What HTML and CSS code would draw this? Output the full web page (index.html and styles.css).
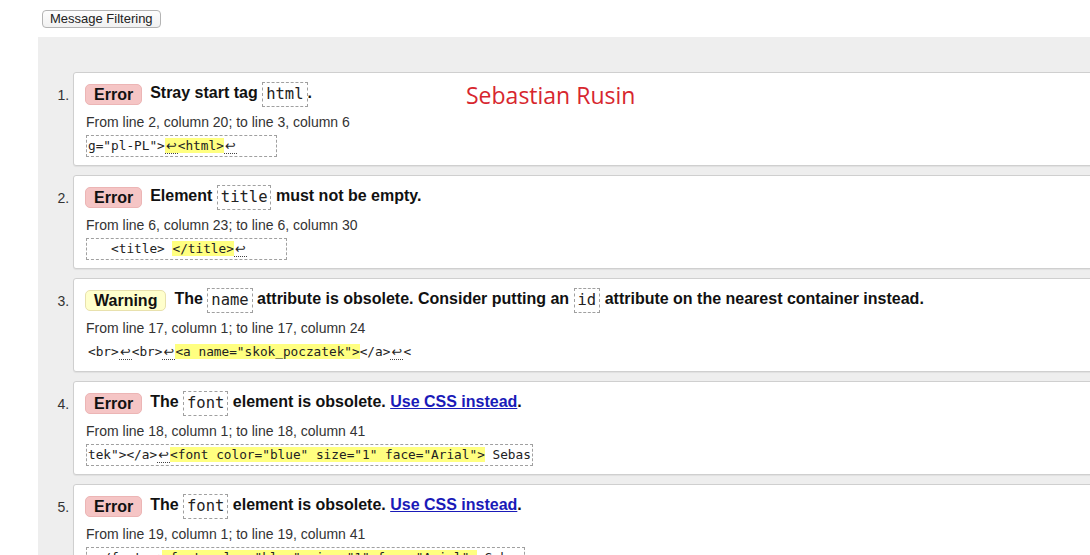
FILE: index.html
```html
<!DOCTYPE html>
<html lang="en">
<head>
<meta charset="utf-8">
<title>Validator results</title>
<link rel="stylesheet" href="styles.css">
</head>
<body>
<div class="page">
  <div class="toolbar">
    <button class="filter-btn" type="button">Message Filtering</button>
  </div>
  <div class="results">
    <ol class="messages">
      <li class="card">
        <p class="msg"><span class="badge badge-error">Error</span><strong class="text">Stray start tag <code>html</code>.</strong></p>
        <p class="loc">From line 2, column 20; to line 3, column 6</p>
        <p class="extract"><code>g="pl-PL"&gt;<mark class="hl"><span class="lf">↩</span>&lt;html&gt;</mark><span class="lf">↩</span>     </code></p>
      </li>
      <li class="card">
        <p class="msg"><span class="badge badge-error">Error</span><strong class="text">Element <code>title</code> must not be empty.</strong></p>
        <p class="loc">From line 6, column 23; to line 6, column 30</p>
        <p class="extract"><code>   &lt;title&gt; <mark class="hl">&lt;/title&gt;</mark><span class="lf">↩</span>     </code></p>
      </li>
      <li class="card">
        <p class="msg"><span class="badge badge-warning">Warning</span><strong class="text">The <code>name</code> attribute is obsolete. Consider putting an <code>id</code> attribute on the nearest container instead.</strong></p>
        <p class="loc">From line 17, column 1; to line 17, column 24</p>
        <p class="extract extract-plain"><code>&lt;br&gt;<span class="lf">↩</span>&lt;br&gt;<span class="lf">↩</span><mark class="hl">&lt;a name="skok_poczatek"&gt;</mark>&lt;/a&gt;<span class="lf">↩</span>&lt;</code></p>
      </li>
      <li class="card">
        <p class="msg"><span class="badge badge-error">Error</span><strong class="text">The <code>font</code> element is obsolete. <a class="link" href="#">Use CSS instead</a>.</strong></p>
        <p class="loc">From line 18, column 1; to line 18, column 41</p>
        <p class="extract"><code>tek"&gt;&lt;/a&gt;<span class="lf">↩</span><mark class="hl">&lt;font color="blue" size="1" face="Arial"&gt;</mark> Sebas</code></p>
      </li>
      <li class="card">
        <p class="msg"><span class="badge badge-error">Error</span><strong class="text">The <code>font</code> element is obsolete. <a class="link" href="#">Use CSS instead</a>.</strong></p>
        <p class="loc">From line 19, column 1; to line 19, column 41</p>
        <p class="extract"><code>n&lt;/font&gt;<span class="lf">↩</span><mark class="hl">&lt;font color="blue" size="1" face="Arial"&gt;</mark> Sebas</code></p>
      </li>
    </ol>
  </div>
  <div class="signature">Sebastian Rusin</div>
</div>
</body>
</html>
```

FILE: styles.css
```css
html, body {
  margin: 0;
  padding: 0;
  overflow: hidden;
  background: #fff;
}

body {
  font-family: "Liberation Sans", Arial, sans-serif;
  color: #222;
}

.page {
  position: relative;
  width: 1090px;
  height: 555px;
  overflow: hidden;
}

.toolbar {
  padding: 10px 0 0 42px;
  height: 27px;
  box-sizing: border-box;
}

.filter-btn {
  display: block;
  margin: 0;
  padding: 0 7px;
  height: 18px;
  font-family: "Liberation Sans", Arial, sans-serif;
  font-size: 13px;
  line-height: 16px;
  color: #222;
  background: linear-gradient(#fdfdfd, #f1f1f1);
  border: 1px solid #b4b4b4;
  border-radius: 4px;
}

.results {
  margin: 10px 0 0 38px;
  padding: 35px 0 0 35px;
  width: 1140px;
  height: 600px;
  background: #eeeeee;
}

.messages {
  margin: 0;
  padding: 0;
  list-style: decimal outside;
  font-size: 14px;
  color: #333;
}

.card {
  margin: 0 0 9px 0;
  padding: 9px 10px 8px 12px;
  background: #fff;
  border: 1px solid #cfcfcf;
  border-radius: 3px;
  box-shadow: 0 1px 1px rgba(0, 0, 0, 0.06);
}

.card::marker {
  font-size: 14px;
  color: #333;
}

.msg {
  display: flex;
  align-items: center;
  gap: 8px;
  height: 24px;
  margin: 0 0 0 -1px;
}

.badge {
  display: inline-block;
  box-sizing: border-box;
  height: 21px;
  padding: 0 8px;
  font-size: 16px;
  font-weight: bold;
  line-height: 19px;
  color: #111;
  border-radius: 5px;
}

.badge-error {
  background: #f5c5c5;
  border: 1px solid #ecb5b5;
}

.badge-warning {
  background: #ffffcc;
  border: 1px solid #e8e1ad;
}

.text {
  font-size: 16px;
  font-weight: bold;
  color: #111;
  line-height: 24px;
  white-space: nowrap;
}

.text code {
  display: inline-block;
  height: 25px;
  box-sizing: border-box;
  padding: 0 3px;
  font-family: "DejaVu Sans Mono", "Liberation Mono", monospace;
  font-size: 15.5px;
  font-weight: normal;
  line-height: 23px;
  color: #222;
  border: 1px dashed #a0a0a0;
  vertical-align: middle;
}

.link {
  color: #1a1ab8;
  text-decoration: underline;
}

.loc {
  margin: 7px 0 0 0;
  font-size: 14px;
  line-height: 18px;
  color: #333;
}

.extract {
  margin: 4px 0 0 0;
}

.extract code {
  display: inline-block;
  box-sizing: border-box;
  height: 22px;
  padding: 1px 1px;
  font-family: "DejaVu Sans Mono", "Liberation Mono", monospace;
  font-size: 12.75px;
  line-height: 18px;
  color: #222;
  white-space: pre;
  border: 1px dashed #a0a0a0;
}

.extract-plain code {
  border-color: transparent;
}

.hl {
  background: #ffff80;
  color: #222;
}

.lf {
  display: inline-block;
  width: 13px;
  text-align: center;
  font-family: "DejaVu Sans", sans-serif;
  line-height: 14px;
  border-bottom: 1px dotted #444;
}

.signature {
  position: absolute;
  left: 466px;
  top: 82px;
  font-family: "Open Sans", Lato, sans-serif;
  font-size: 23px;
  line-height: 27px;
  color: #d7262e;
}
```
